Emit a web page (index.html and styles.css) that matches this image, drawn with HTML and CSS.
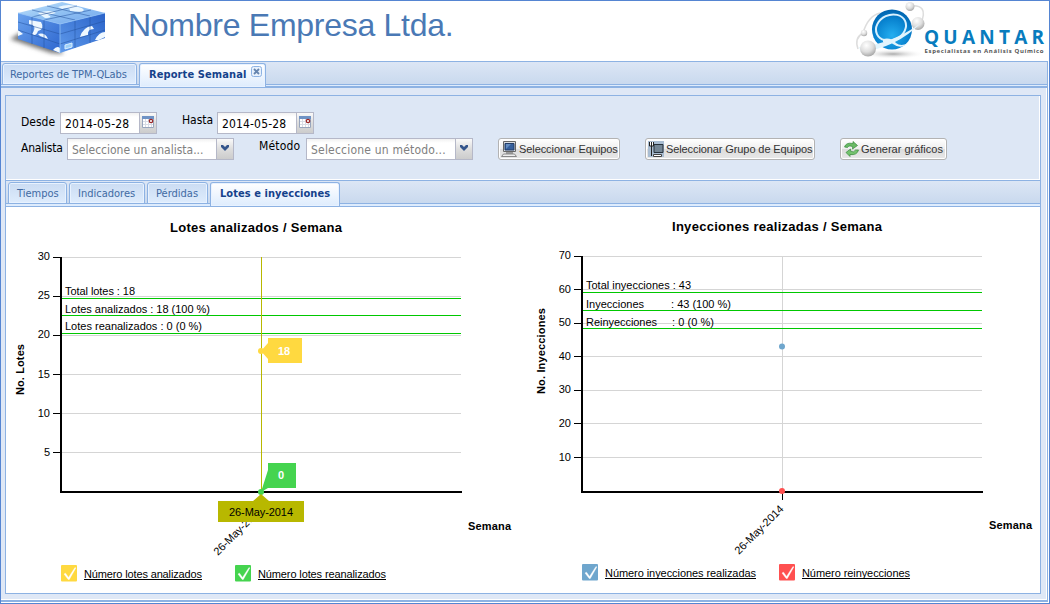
FILE: index.html
```html
<!DOCTYPE html>
<html lang="es">
<head>
<meta charset="utf-8">
<title>Reporte Semanal</title>
<link rel="stylesheet" href="styles.css">
</head>
<body>
<div class="app">
  <header class="header">
    <svg class="cube" width="104" height="60" viewBox="0 0 104 60">
      <defs>
        <linearGradient id="top" x1="0" y1="0" x2="1" y2="1"><stop offset="0" stop-color="#bfe1fa"/><stop offset=".5" stop-color="#8fc0f3"/><stop offset="1" stop-color="#70a5ec"/></linearGradient>
        <linearGradient id="left" x1="0" y1="0" x2="1" y2="1"><stop offset="0" stop-color="#69a1ed"/><stop offset="1" stop-color="#2d66cf"/></linearGradient>
        <linearGradient id="right" x1="1" y1="0" x2="0" y2="1"><stop offset="0" stop-color="#2a62c8"/><stop offset="1" stop-color="#5f9aeb"/></linearGradient>
        <filter id="soft"><feGaussianBlur stdDeviation="2"/></filter>
      </defs>
      <path d="M2 37 15 29 52 46 55 52 43 51Z" fill="#777" filter="url(#soft)"/>
      <path d="M10 11 54 0 97 11 52 22Z" fill="url(#top)"/>
      <path d="M10 11 52 22 52 51 10 37Z" fill="url(#left)"/>
      <path d="M52 22 97 11V36L52 51Z" fill="url(#right)"/>
      <path d="M50 5Q61 1 70 5Q79 7 74 10L62 9Q62 4 54 7ZM30 11Q42 7 48 11L40 13Q46 16 37 16Z" fill="#e9f6ff"/>
      <path d="M21 18 33 20Q37 27 30 29Q28 35 24 32Q30 23 21 22ZM30 32Q37 30 40 37L32 34ZM72 35Q75 25 84 24L86 27Q79 27 80 33ZM87 38Q91 30 97 30V35L91 38ZM45 48Q49 43 52 46V51ZM10 28 15 32 10 34Z" fill="#eff8ff"/>
      <path d="m57 43 7-2v4l-7 2z" fill="#9dd0f8" stroke="#d8efff"/>
      <path d="M10 20 52 32 97 19M10 28 52 42 97 28M24 15V42M36 18V46M67 18V46M82 15V41M24 8 67 18M39 4 82 14M69 4 24 15M83 8 36 18" fill="none" stroke="#214f9c" stroke-width="1" opacity=".5"/>
      <path d="M10 11 52 22 97 11M52 22V51" fill="none" stroke="#90c1f6" stroke-width=".8"/>
    </svg>
    <h1 class="company">Nombre Empresa Ltda.</h1>
    <svg class="quantar" width="199" height="59" viewBox="0 0 199 59">
      <defs>
        <radialGradient id="blue" cx=".5" cy=".65" r=".65"><stop offset="0" stop-color="#24aef0"/><stop offset=".65" stop-color="#0882cf"/><stop offset="1" stop-color="#0062ad"/></radialGradient>
        <radialGradient id="grey" cx=".4" cy=".3" r=".7"><stop offset="0" stop-color="#fff"/><stop offset=".6" stop-color="#ddd"/><stop offset="1" stop-color="#aaa"/></radialGradient>
        <radialGradient id="shade"><stop offset="0" stop-color="#aaa"/><stop offset="1" stop-color="#fff" stop-opacity="0"/></radialGradient>
      </defs>
      <ellipse cx="43" cy="53" rx="32" ry="5" fill="url(#shade)"/>
      <path d="M13 32Q18 15 30 12M13 32Q4 37 8 48M60 5Q79 3 71 22" fill="none" stroke="#ddd" stroke-width="1.500"/>
      <circle cx="42" cy="28.500" r="20" fill="url(#blue)"/>
      <circle cx="60" cy="5.500" r="4.500" fill="url(#grey)"/><circle cx="68" cy="22.500" r="6.500" fill="url(#grey)"/><circle cx="14" cy="32" r="3.200" fill="url(#grey)"/>
      <ellipse cx="41" cy="26.500" rx="15.500" ry="12.500" transform="rotate(-25 41 26.500)" fill="none" stroke="#d8f1ff" stroke-width="2"/>
      <path d="M9 46Q42 43 71 22Q46 47 11 51ZM33 38Q41 36 46 42Q51 46 58 42Q51 49 43 43Q39 40 33 41Z" fill="#e2f4fd"/>
      <circle cx="18" cy="47.500" r="8" fill="url(#grey)"/>
      <text x="74" y="43" textLength="120" class="brand">QUANTAR</text>
      <text x="74.500" y="51.500" textLength="119" class="slogan">Especialistas en Análisis Químico</text>
    </svg>
  </header>

  <main class="frame">
    <nav class="tabs main-tabs">
      <div class="tab"><span class="t-rep">Reportes de TPM-QLabs</span></div>
      <div class="tab active"><span class="t-sem">Reporte Semanal</span>
        <svg class="close" width="11" height="11" viewBox="0 0 11 11"><rect x=".5" y=".5" width="10" height="10" rx="2" fill="#e8f1fc" stroke="#8db2e3"/><path d="m3 3 5 5m0-5-5 5" stroke="#6685ae" stroke-width="1.800"/></svg>
      </div>
    </nav>
    <div class="content">
      <section class="filters">
        <div class="row dates">
          <label class="l-desde">Desde</label>
          <div class="field date"><span>2014-05-28</span><i class="trigger"><svg width="16" height="18"><use href="#calendar"/></svg></i></div>
          <label class="l-hasta">Hasta</label>
          <div class="field date"><span>2014-05-28</span><i class="trigger"><svg width="16" height="18"><use href="#calendar"/></svg></i></div>
        </div>
        <div class="row selects">
          <label class="l-analista">Analista</label>
          <div class="field combo"><span>Seleccione un analista...</span><i class="trigger"><svg width="16" height="18"><use href="#arrow"/></svg></i></div>
          <label class="l-metodo">Método</label>
          <div class="field combo metodo"><span>Seleccione un método...</span><i class="trigger"><svg width="16" height="18"><use href="#arrow"/></svg></i></div>
          <button class="btn b-equipos"><svg width="16" height="16"><path d="M2.500.5h12v10h-12z" fill="#d9dde2" stroke="#666"/><path d="M4 2.500h9V9H4z" fill="#355f9d" stroke="#233c67"/><path d="M5 3h5L5 8z" fill="#638cc1"/><path d="M5 11h7v2H5z" fill="#999"/><path d="M2.500 13h11l2 2.500H.5z" fill="#eee" stroke="#888"/></svg><span>Seleccionar Equipos</span></button>
          <button class="btn b-grupo"><svg width="16" height="16"><path d="M0 0h16v16H0z" fill="#a9bdd2"/><path d="M6 3.500h9v8H6z" fill="#748695" stroke="#27313b"/><path d="M1.500 1v4h4V1M3.500 1v14" fill="#fff" stroke="#222"/><path d="M5.500 13.500h8v2h-8z" fill="#fff" stroke="#444"/></svg><span>Seleccionar Grupo de Equipos</span></button>
          <button class="btn b-generar"><svg width="16" height="16"><path d="M1.500 6Q3 1 10 2.500V.5l4.500 4-5 3.500.2-2.300Q6 4 4.500 6.500Z" fill="#6aba65" stroke="#368a3b" stroke-width=".7"/><path d="M15.500 9Q14 14.500 7 13.500v2l-4-4 4.500-3.500.2 2.300Q11 12 12.500 9Z" fill="#75c36e" stroke="#368a3b" stroke-width=".7"/></svg><span>Generar gráficos</span></button>
        </div>
      </section>

      <nav class="tabs sub-tabs">
        <div class="tab"><span class="t-tie">Tiempos</span></div>
        <div class="tab"><span class="t-ind">Indicadores</span></div>
        <div class="tab"><span class="t-per">Pérdidas</span></div>
        <div class="tab active"><span class="t-lot">Lotes e inyecciones</span></div>
      </nav>

      <section class="charts">
        <!-- viewBox origins keep both charts in page units -->
        <svg class="chart" width="517" height="386" viewBox="6 207 517 386">
          <text class="title" x="170" y="232" textLength="172">Lotes analizados / Semana</text>
          <g class="grid"><path d="M62 257.500H461M62 296.500H461M62 335.500H461M62 374.500H461M62 413.500H461M62 452.500H461"/></g>
          <g class="ticks"><path d="M53 257.500H61M53 296.500H61M53 335.500H61M53 374.500H61M53 413.500H61M53 452.500H61"/></g>
          <g class="tick-label"><text x="50" y="260">30</text><text x="50" y="299">25</text><text x="50" y="338">20</text><text x="50" y="378">15</text><text x="50" y="417">10</text><text x="50" y="456">5</text></g>
          <path class="limit" d="M61 298.500H461M61 315.500H461M61 333.500H461"/>
          <path class="axis" d="M61 257V492H462"/>
          <text x="65" y="295" textLength="70">Total lotes : 18</text>
          <text x="65" y="313" textLength="145">Lotes analizados : 18 (100 %)</text>
          <text x="65" y="330" textLength="137">Lotes reanalizados : 0 (0 %)</text>
          <text class="bold" transform="translate(24 395) rotate(-90)" textLength="51">No. Lotes</text>
          <text class="bold" x="468" y="530" textLength="43">Semana</text>
          <text transform="translate(218 556) rotate(-45)" textLength="64">26-May-2014</text>
          <path d="M261.500 257V492" stroke="#b8b800"/>
          <circle cx="261" cy="351" r="3" fill="#ffd940"/>
          <path d="M261 351 268 343V338H302V363H268V359Z" fill="#ffd940"/>
          <text class="tip" x="284" y="355">18</text>
          <circle cx="261" cy="492" r="3" fill="#45d44f"/>
          <path d="M261 492 268 470V463H296V488H268Z" fill="#45d44f"/>
          <text class="tip" x="281" y="479">0</text>
          <path d="M261 494 269 501H304V522H218V501H253Z" fill="#b8b800"/>
          <text x="229" y="516" textLength="64">26-May-2014</text>
          <svg x="61" y="565" width="16" height="17"><rect width="16" height="16.500" rx="1" fill="#ffd940"/><use href="#check"/></svg>
          <text x="84" y="578" textLength="118">Número lotes analizados</text><path class="underline" d="M84 579.500H202"/>
          <svg x="235" y="565" width="16" height="17"><rect width="16" height="16.500" rx="1" fill="#45d44f"/><use href="#check"/></svg>
          <text x="258" y="578" textLength="128">Número lotes reanalizados</text><path class="underline" d="M258 579.500H386"/>
        </svg>
        <svg class="chart" width="517" height="386" viewBox="523 207 517 386">
          <text class="title" x="672" y="231" textLength="210">Inyecciones realizadas / Semana</text>
          <g class="grid"><path d="M583 256.500H982M583 289.500H982M583 323.500H982M583 356.500H982M583 390.500H982M583 423.500H982M583 457.500H982M782.500 256V491"/></g>
          <g class="ticks"><path d="M574 256.500H582M574 289.500H582M574 323.500H582M574 356.500H582M574 390.500H582M574 423.500H582M574 457.500H582M782.500 492V500"/></g>
          <g class="tick-label"><text x="571" y="259">70</text><text x="571" y="293">60</text><text x="571" y="326">50</text><text x="571" y="360">40</text><text x="571" y="393">30</text><text x="571" y="427">20</text><text x="571" y="461">10</text></g>
          <path class="limit" d="M582 292.500H982M582 310.500H982M582 328.500H982"/>
          <path class="axis" d="M582 256V492M581 492H983"/>
          <text x="586" y="289" textLength="105">Total inyecciones : 43</text>
          <text x="586" y="308" textLength="58">Inyecciones</text><text x="671" y="308" textLength="60">: 43 (100 %)</text>
          <text x="586" y="326" textLength="71">Reinyecciones</text><text x="672" y="326" textLength="42">: 0 (0 %)</text>
          <circle cx="782" cy="346.500" r="3" fill="#6fa6cd"/><circle cx="782" cy="491" r="3" fill="#ff5050"/>
          <text class="bold" transform="translate(545 394) rotate(-90)" textLength="86">No. Inyecciones</text>
          <text class="bold" x="989" y="529" textLength="43">Semana</text>
          <text transform="translate(739 555) rotate(-45)" textLength="64">26-May-2014</text>
          <svg x="582" y="564" width="16" height="17"><rect width="16" height="16.500" rx="1" fill="#6fa6cd"/><use href="#check"/></svg>
          <text x="605" y="577" textLength="151">Número inyecciones realizadas</text><path class="underline" d="M605 578.500H756"/>
          <svg x="779" y="564" width="16" height="17"><rect width="16" height="16.500" rx="1" fill="#ff5050"/><use href="#check"/></svg>
          <text x="802" y="577" textLength="108">Número reinyecciones</text><path class="underline" d="M802 578.500H910"/>
        </svg>
      </section>
    </div>
  </main>
</div>
<svg class="symbols" width="0" height="0">
  <symbol id="calendar" viewBox="0 0 16 18"><path d="M2.500 3.500h11v11h-11z" fill="#fff" stroke="#98a6bd"/><path d="M2 3h12v3H2z" fill="#6f93c5"/><path d="M5.500 6v8M8.500 6v8M11.500 6v8M3 8.500h10M3 11.500h10" stroke="#d8dce5"/><circle cx="11" cy="8" r="1.700" fill="#fff" stroke="#9b2727" stroke-width="1.300"/></symbol>
  <symbol id="arrow" viewBox="0 0 16 18"><path d="M4 6h2l2 2 2-2h2v2l-4 4-4-4z" fill="#34558b"/></symbol>
  <symbol id="check" viewBox="0 0 16 17"><path d="m3 9 1.500-.8L7.500 12.500 14 2.500l.8.5L8.300 14.500h-1.100z" fill="#fff" stroke="#fff" stroke-width=".4"/></symbol>
</svg>
</body>
</html>
```

FILE: styles.css
```css
* { box-sizing: border-box; }
body { margin: 0; background: #fff; font: 12px "DejaVu Sans Condensed", "DejaVu Sans", sans-serif; font-stretch: condensed; }
svg { display: block; flex: none; }
.symbols { position: absolute; }
.app { width: 1050px; height: 604px; border: 1px solid #5585d2; display: flex; flex-direction: column; overflow: hidden; }
.header { height: 60px; display: flex; align-items: flex-start; flex: none; }
.cube { margin: 1px 0 0 7px; }
.company { margin: 6px 0 0 16px; width: 327px; font: 32px/36px "Liberation Sans", sans-serif; letter-spacing: -.27px; color: #4a79b5; white-space: nowrap; }
.quantar { margin-left: auto; }
.brand { font: bold 19px "Open Sans", sans-serif; fill: #087cbe; }
.slogan { font: bold 6px "Open Sans", sans-serif; fill: #555; }
.frame { width: 1047px; height: 541px; border: 1px solid #8db2e3; border-left: 0; border-bottom: 2px solid #8db2e3; background: #dfe8f6; display: flex; flex-direction: column; }
.tabs { display: flex; align-items: flex-start; flex: none; position: relative; white-space: nowrap; }
.tab { height: 22px; border: 1px solid #8db2e3; border-radius: 3px 3px 0 0; color: #416aa3; background: linear-gradient(#cbdcf3, #deecfd); font-size: 11px; line-height: 22px; box-shadow: inset 0 0 0 1px #e8f2ff; padding-left: 8px; }
.tab span { display: block; }
.tab.active { position: relative; z-index: 1; height: 24px; border-bottom: 0; background: linear-gradient(#fff, #deecfd); color: #15428b; font-weight: bold; display: flex; padding-left: 9px; }
.main-tabs { height: 26px; padding: 1px 0 0 1px; gap: 2px; border-bottom: 2px solid #8db2e3; background: linear-gradient(#dce6f5, #c9d9ee 22px, #8db2e3 22px, #8db2e3 23px, #deecfd 23px); }
.main-tabs .tab { width: 135px; padding-left: 7px; letter-spacing: -.05px; }
.main-tabs .active { width: 127px; padding-left: 9px; letter-spacing: .1px; }
.main-tabs .close { margin: 2px 0 0 5px; }
.content { flex: 1; min-height: 0; padding: 7px 5px 5px 4px; border-right: 1px solid #fff; border-bottom: 1px solid #fff; display: flex; flex-direction: column; }
.filters { height: 85px; flex: none; border: 1px solid #8db2e3; border-bottom: 0; box-shadow: inset -1px -1px #fff; background: #dde7f5; padding: 16px 0 0 15px; }
.row { display: flex; height: 22px; }
.selects { margin-top: 4px; }
.row label { display: block; line-height: 16px; white-space: nowrap; }
.l-desde { width: 39px; padding-top: 2px; }
.l-hasta { width: 60px; padding-left: 25px; }
.l-analista { width: 46px; padding-top: 2px; letter-spacing: -.2px; }
.l-metodo { width: 73px; margin-left: -1px; padding-left: 26px; letter-spacing: .15px; }
.field { height: 22px; display: flex; border: 1px solid #b5b8c8; background: linear-gradient(#f1f1f1, #fff 4px); }
.field span { flex: 1; padding-left: 4px; line-height: 22px; white-space: nowrap; }
.date { width: 97px; letter-spacing: .15px; }
.combo { width: 167px; color: #808080; }
.metodo { letter-spacing: .2px; }
.trigger { width: 17px; border-left: 1px solid #b5b8c8; background: linear-gradient(#fafafa, #ddd 50%, #ccc); }
.btn { height: 22px; border: 1px solid #b3b3b3; border-radius: 3px; padding: 1px 2px; background: linear-gradient(#fff, #eee 50%, #dcdcdc 51%, #e8e8e8); box-shadow: inset 0 0 0 1px #fff; color: #333; font: 11px "Liberation Sans", sans-serif; display: flex; align-items: center; gap: 2px; white-space: nowrap; letter-spacing: -.1px; }
.b-equipos { width: 122px; margin-left: 25px; letter-spacing: -.15px; letter-spacing: -.08px; }
.b-grupo { width: 170px; margin-left: 25px; }
.b-generar { width: 107px; margin-left: 25px; letter-spacing: 0; }
.sub-tabs { height: 27px; padding: 1px 0 0 2px; gap: 2px; border: 1px solid #8db2e3; background: linear-gradient(#dce6f5, #c9d9ee 22px, #8db2e3 22px, #8db2e3 23px, #deecfd 23px); }
.sub-tabs .tab:nth-child(1) { width: 59px; }
.sub-tabs .tab:nth-child(2) { width: 76px; }
.sub-tabs .tab:nth-child(3) { width: 61px; }
.sub-tabs .active { width: 130px; letter-spacing: .05px; }
.charts { width: 1036px; flex: 1; min-height: 0; display: flex; background: #fff; border: 1px solid #8db2e3; border-top: 0; }
.chart { font: 11px "Liberation Sans", sans-serif; }
.title { font-size: 13px; font-weight: bold; }
.bold { font-weight: bold; }
.grid { fill: none; stroke: #d5d5d5; shape-rendering: crispEdges; }
.ticks, .underline { stroke: #000; shape-rendering: crispEdges; }
.tick-label { text-anchor: end; }
.limit { stroke: #00c800; shape-rendering: crispEdges; }
.axis { fill: none; stroke: #000; stroke-width: 2; shape-rendering: crispEdges; }
.tip { fill: #fff; font-weight: bold; text-anchor: middle; }
```
